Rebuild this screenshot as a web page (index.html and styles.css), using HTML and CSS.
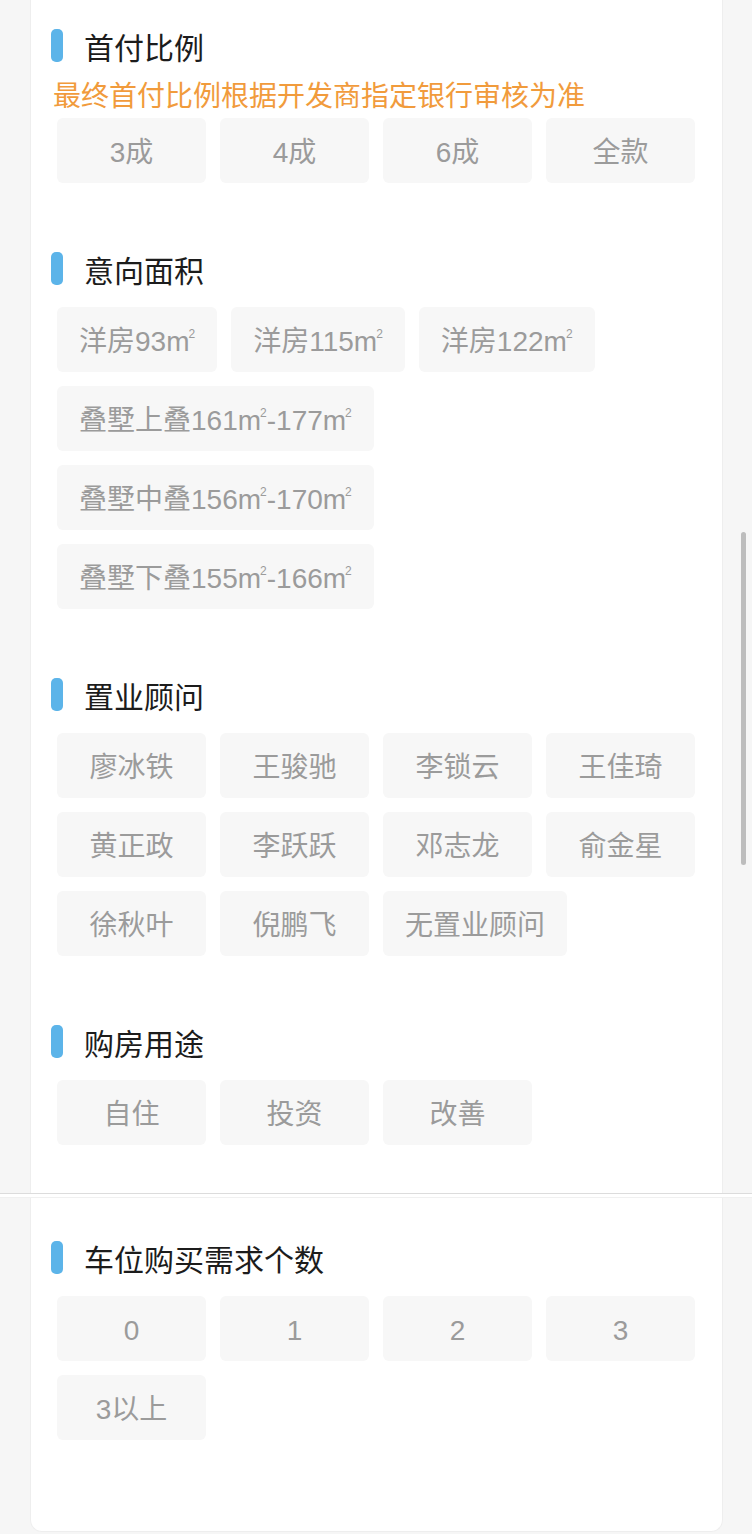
FILE: index.html
```html
<!DOCTYPE html>
<html lang="zh-CN">
<head>
  <meta charset="UTF-8">
  <meta name="viewport" content="width=device-width, initial-scale=1.0">
  <title>购房意向</title>
  <link rel="stylesheet" href="styles.css">
</head>
<body>
  <div class="card card-top">
    <div class="section">
      <div class="title"><span class="mark"></span>首付比例</div>
      <div class="note">最终首付比例根据开发商指定银行审核为准</div>
      <div class="chips">
        <div class="chip">3成</div>
        <div class="chip">4成</div>
        <div class="chip">6成</div>
        <div class="chip">全款</div>
      </div>
    </div>
    <div class="section">
      <div class="title"><span class="mark"></span>意向面积</div>
      <div class="chips">
        <div class="chip">洋房93m<sup>2</sup></div>
        <div class="chip">洋房115m<sup>2</sup></div>
        <div class="chip">洋房122m<sup>2</sup></div>
        <div class="chip">叠墅上叠161m<sup>2</sup>-177m<sup>2</sup></div>
        <div class="chip">叠墅中叠156m<sup>2</sup>-170m<sup>2</sup></div>
        <div class="chip">叠墅下叠155m<sup>2</sup>-166m<sup>2</sup></div>
      </div>
    </div>
    <div class="section">
      <div class="title"><span class="mark"></span>置业顾问</div>
      <div class="chips">
        <div class="chip">廖冰铁</div>
        <div class="chip">王骏驰</div>
        <div class="chip">李锁云</div>
        <div class="chip">王佳琦</div>
        <div class="chip">黄正政</div>
        <div class="chip">李跃跃</div>
        <div class="chip">邓志龙</div>
        <div class="chip">俞金星</div>
        <div class="chip">徐秋叶</div>
        <div class="chip">倪鹏飞</div>
        <div class="chip">无置业顾问</div>
      </div>
    </div>
    <div class="section">
      <div class="title"><span class="mark"></span>购房用途</div>
      <div class="chips">
        <div class="chip">自住</div>
        <div class="chip">投资</div>
        <div class="chip">改善</div>
      </div>
    </div>
  </div>
  <div class="divider"></div>
  <div class="card card-bottom">
    <div class="section">
      <div class="title"><span class="mark"></span>车位购买需求个数</div>
      <div class="chips">
        <div class="chip">0</div>
        <div class="chip">1</div>
        <div class="chip">2</div>
        <div class="chip">3</div>
        <div class="chip">3以上</div>
      </div>
    </div>
  </div>
  <!-- barre de défilement iOS -->
  <div class="scrollbar"></div>
</body>
</html>
```

FILE: styles.css
```css
body {
  margin: 0;
  background: #f6f6f6;
  font-family: 'Liberation Sans', 'Noto Sans CJK SC', sans-serif;
  padding-bottom: 4px;
}
.card {
  background: #ffffff;
  margin: 0 29px 0 30px;
  padding: 0 26px 0 20px;
  border-left: 1px solid #eeeeee;
  border-right: 1px solid #eeeeee;
}
.card-top {
  padding-top: 29px;
  padding-bottom: 48px;
}
.card-bottom {
  padding-top: 43px;
  padding-bottom: 91px;
  border-radius: 0 0 12px 12px;
  border-bottom: 1px solid #eeeeee;
}
.section + .section { margin-top: 69px; }
.title {
  display: flex;
  align-items: center;
  height: 33px;
  font-size: 30px;
  color: #1c1c1c;
  font-family: 'Noto Sans CJK SC', sans-serif;
  margin-bottom: 22px;
}
.mark {
  width: 12px;
  height: 33px;
  border-radius: 5px;
  background: #5cb4e9;
  margin-right: 21px;
}
.note {
  font-size: 28px;
  line-height: 40px;
  color: #f19b3c;
  font-family: 'Noto Sans CJK SC', sans-serif;
  margin: -10px 0 4px 2px;
}
.chips {
  display: flex;
  flex-wrap: wrap;
  gap: 14px;
  padding-left: 6px;
}
.chip {
  box-sizing: border-box;
  min-width: 149px;
  height: 65px;
  line-height: 69px;
  padding: 0 22px;
  border-radius: 6px;
  background: #f7f7f7;
  color: #9b9b9b;
  font-size: 28px;
  text-align: center;
  white-space: nowrap;
  overflow: hidden;
}
.chip sup {
  font-size: 12px;
  line-height: 0;
  vertical-align: 13px;
  margin-left: -1px;
}
/* double filet pleine largeur */
.divider {
  height: 3px;
  background: #ffffff;
  border-top: 1px solid #dcdcdc;
  border-bottom: 1px solid #f0f0f0;
}
.scrollbar {
  position: fixed;
  left: 741px;
  top: 532px;
  width: 5px;
  height: 333px;
  border-radius: 3px;
  background: #bdbdbd;
}
```
